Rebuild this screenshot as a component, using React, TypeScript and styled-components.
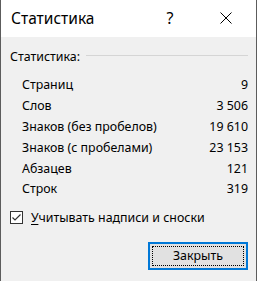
import { FC } from 'react';
import styled, { createGlobalStyle } from 'styled-components';

const GlobalStyle = createGlobalStyle`
  html, body {
    margin: 0;
    padding: 0;
    background: #f0f0f0;
  }
  body {
    font-family: 'Segoe UI', 'Noto Sans', sans-serif;
    color: #000;
  }
`;

const Window = styled.div`
  width: 257px;
  height: 281px;
  box-sizing: border-box;
  border-left: 1px solid #5c5c5c;
  border-right: 1px solid #5c5c5c;
  background: #f0f0f0;
  display: flex;
  flex-direction: column;
  overflow: hidden;
`;

const TitleBar = styled.div`
  height: 37px;
  flex-shrink: 0;
  background: #fff;
  display: flex;
  align-items: center;
  padding-left: 10px;
  padding-right: 24px;
`;

const Title = styled.div`
  flex: 1;
  font-size: 15.5px;
  line-height: 20px;
  margin-top: -1px;
`;

const HelpButton = styled.div`
  width: 8px;
  font-size: 16px;
  line-height: 20px;
  margin-right: 46px;
  margin-top: -2px;
  text-align: center;
`;

const CloseIcon = styled.svg`
  width: 12px;
  height: 12px;
  display: block;
  margin-top: -1px;
`;

const Body = styled.div`
  flex: 1;
  padding: 11px 8px 0 9px;
  display: flex;
  flex-direction: column;
  font-size: 12.4px;
`;

const GroupHeader = styled.div`
  display: flex;
  align-items: center;
  height: 16px;
  gap: 6px;
`;

const GroupLine = styled.div`
  flex: 1;
  height: 1px;
  background: #d5d5d5;
  margin-top: -1px;
`;

const StatList = styled.div`
  margin-top: 11px;
  padding-left: 12px;
  display: flex;
  flex-direction: column;
`;

const StatRow = styled.div`
  display: flex;
  justify-content: space-between;
  align-items: center;
  height: 20.8px;
  line-height: 16px;
`;

const CheckRow = styled.label`
  display: flex;
  align-items: center;
  gap: 8px;
  margin-top: 10px;
  height: 16px;
`;

const CheckBox = styled.span`
  width: 13px;
  height: 13px;
  box-sizing: border-box;
  border: 1px solid #333;
  background: #fff;
  display: flex;
  align-items: center;
  justify-content: center;
`;

const Underlined = styled.span`
  text-decoration: underline;
  text-underline-offset: 2px;
`;

const Footer = styled.div`
  display: flex;
  justify-content: flex-end;
  margin-top: 16px;
  padding-right: 0px;
`;

const Button = styled.button`
  position: relative;
  width: 100px;
  height: 28px;
  box-sizing: border-box;
  border: 2px solid #0078d7;
  background: #e1e1e1;
  font-family: inherit;
  font-size: 12.4px;
  color: #000;
  padding: 0;

  &::after {
    content: '';
    position: absolute;
    inset: 2px;
    border: 1px dotted #000;
  }
`;

const stats = [
  { label: 'Страниц', value: '9' },
  { label: 'Слов', value: '3 506' },
  { label: 'Знаков (без пробелов)', value: '19 610' },
  { label: 'Знаков (с пробелами)', value: '23 153' },
  { label: 'Абзацев', value: '121' },
  { label: 'Строк', value: '319' },
];

const App: FC = () => {
  return (
    <>
      <GlobalStyle />
      <Window>
        <TitleBar>
          <Title>Статистика</Title>
          <HelpButton>?</HelpButton>
          <CloseIcon viewBox="0 0 12 12">
            <path d="M0.5 0.5 L11.5 11.5 M11.5 0.5 L0.5 11.5" stroke="#000" strokeWidth="1" fill="none" />
          </CloseIcon>
        </TitleBar>
        <Body>
          <GroupHeader>
            <span>Статистика:</span>
            <GroupLine />
          </GroupHeader>
          <StatList>
            {stats.map((s) => (
              <StatRow key={s.label}>
                <span>{s.label}</span>
                <span>{s.value}</span>
              </StatRow>
            ))}
          </StatList>
          <CheckRow>
            <CheckBox>
              <svg width="11" height="11" viewBox="0 0 11 11">
                <path d="M1.5 5.5 L4 8 L9.5 2.5" stroke="#333" strokeWidth="1.2" fill="none" />
              </svg>
            </CheckBox>
            <span>
              <Underlined>У</Underlined>читывать надписи и сноски
            </span>
          </CheckRow>
          <Footer>
            <Button>Закрыть</Button>
          </Footer>
        </Body>
      </Window>
    </>
  );
};

export default App;
